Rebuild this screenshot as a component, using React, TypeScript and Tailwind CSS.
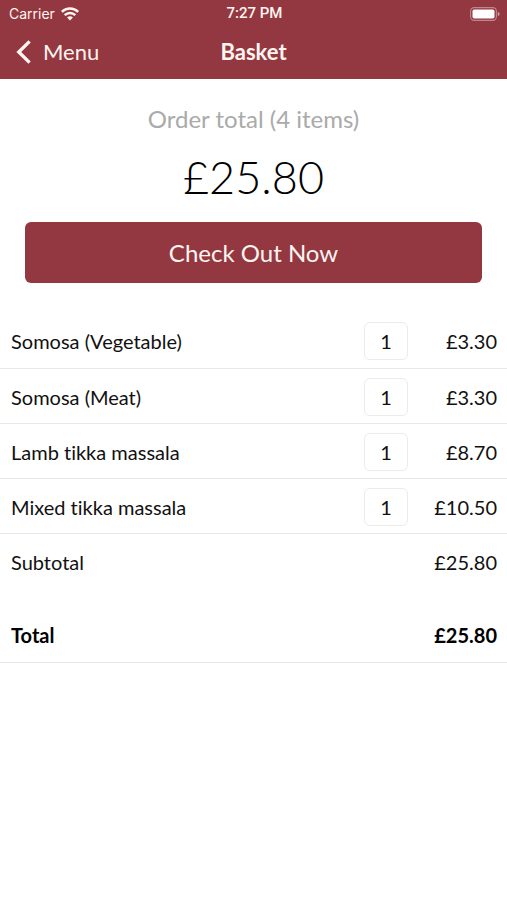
import React, { useState } from "react";

type Item = { id: string; name: string; quantity: string; price: string };

const initialItems: Item[] = [
  { id: "somosa-vegetable", name: "Somosa (Vegetable)", quantity: "1", price: "£3.30" },
  { id: "somosa-meat", name: "Somosa (Meat)", quantity: "1", price: "£3.30" },
  { id: "lamb-tikka", name: "Lamb tikka massala", quantity: "1", price: "£8.70" },
  { id: "mixed-tikka", name: "Mixed tikka massala", quantity: "1", price: "£10.50" },
];

function WifiIcon() {
  return (
    <svg className="h-[14px] w-[18px]" viewBox="0 0 18 14" fill="none" stroke="currentColor" strokeWidth="2.5" aria-hidden="true">
      <path d="M0.8 4.9 A11.8 11.8 0 0 1 17.2 4.9" />
      <path d="M3.7 8.1 A7.6 7.6 0 0 1 14.3 8.1" />
      <path d="M6.1 10.5 A4 4 0 0 1 11.9 10.5 L9 13.6 Z" fill="currentColor" stroke="none" />
    </svg>
  );
}

function BatteryIcon() {
  return (
    <svg className="h-[14px] w-[30px]" viewBox="0 0 30 14" fill="none" aria-hidden="true">
      <rect x="0.6" y="0.6" width="25.8" height="12.8" rx="3.6" stroke="#fff" strokeOpacity="0.4" strokeWidth="1.1" />
      <rect x="2.5" y="2.5" width="22" height="9" rx="1.8" fill="#fff" />
      <path d="M27.8 4.8 C30.2 5.6 30.2 8.4 27.8 9.2 Z" fill="#fff" fillOpacity="0.5" />
    </svg>
  );
}

function Header() {
  return (
    <header className="bg-[#933840] text-[#fff4f0]">
      <div className="grid h-7 grid-cols-[1fr_auto_1fr] items-center pr-[7px] pl-[9px] font-['Roboto','Inter',sans-serif] text-sm">
        <div className="flex items-center gap-[6px] font-['Inter','Roboto',sans-serif]">
          <span>Carrier</span>
          <WifiIcon />
        </div>
        <span className="text-[15px] font-medium">7:27 PM</span>
        <div className="flex justify-end">
          <BatteryIcon />
        </div>
      </div>
      <nav className="grid h-[51px] grid-cols-[1fr_auto_1fr] items-center pb-1 text-[22px] leading-7">
        <button type="button" className="flex items-center gap-3 justify-self-start pl-4">
          <svg className="h-6 w-[15px]" viewBox="0 0 15 24" fill="none" stroke="currentColor" strokeWidth="3.4" aria-hidden="true">
            <path d="M13.6 1.4 L2.8 12 L13.6 22.6" />
          </svg>
          <span>Menu</span>
        </button>
        <h1 className="font-bold">Basket</h1>
      </nav>
    </header>
  );
}

export default function App() {
  const [items, setItems] = useState(initialItems);

  const changeQuantity = (id: string, quantity: string) =>
    setItems((current) => current.map((item) => (item.id === id ? { ...item, quantity } : item)));

  return (
    <div className="min-h-screen bg-white font-['Lato',sans-serif] text-[#111] [font-variant-ligatures:none]">
      <Header />
      <main>
        <section className="px-[25px] pt-6 text-center">
          <p className="text-2xl text-[#aaa]">Order total (4 items)</p>
          <p className="pt-3 text-[45px] leading-[60px] font-light text-black">£25.80</p>
          <button type="button" className="mt-[15px] h-[61px] w-full rounded-md bg-[#933840] text-2xl text-[#fff4f0]">
            Check Out Now
          </button>
        </section>
        <table className="mt-[30px] w-full border-collapse text-xl">
          <tbody>
            {items.map((item) => (
              <tr key={item.id} className="h-[55px] border-b border-[#e8e8e8]">
                <th scope="row" className="pt-[2px] pl-[11px] text-left font-normal">
                  <label htmlFor={item.id}>{item.name}</label>
                </th>
                <td className="w-11 pt-[2px]">
                  <input
                    id={item.id}
                    type="text"
                    inputMode="numeric"
                    value={item.quantity}
                    onChange={(event) => changeQuantity(item.id, event.target.value)}
                    className="block h-[38px] w-11 rounded-md border border-[#ebebeb] bg-white text-center"
                  />
                </td>
                <td className="w-[99px] pt-[2px] pr-[10px] text-right">{item.price}</td>
              </tr>
            ))}
          </tbody>
          <tfoot>
            <tr className="h-[56px]">
              <th scope="row" className="pt-[2px] pl-[11px] text-left font-normal">Subtotal</th>
              <td colSpan={2} className="pt-[2px] pr-[10px] text-right">£25.80</td>
            </tr>
            <tr className="h-[73px] border-b border-[#e8e8e8] font-bold text-black">
              <th scope="row" className="pt-5 pl-[11px] text-left">Total</th>
              <td colSpan={2} className="pt-5 pr-[10px] text-right">£25.80</td>
            </tr>
          </tfoot>
        </table>
      </main>
    </div>
  );
}
